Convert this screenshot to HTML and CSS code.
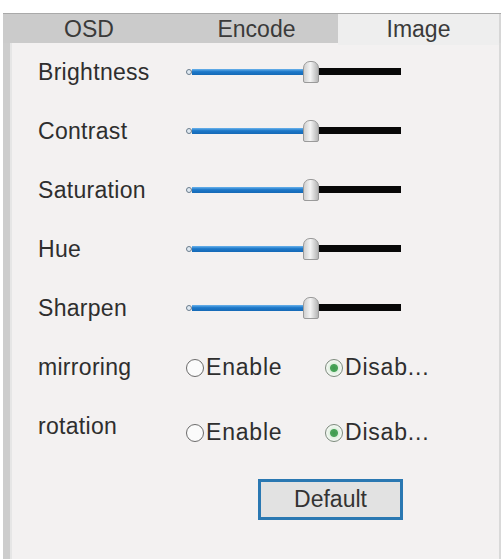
FILE: index.html
```html
<!doctype html>
<html lang="en">

<head>
	<title>Image settings</title>
	<meta charset="utf-8">
	<link rel="stylesheet" href="styles.css">
</head>

<body>
	<div class="strip"></div>
	<div class="dialog">
		<div class="tabs">
			<div class="tab">OSD</div>
			<div class="tab">Encode</div>
			<div class="tab active">Image</div>
		</div>
		<div class="panel">
			<div class="row">
				<span class="label">Brightness</span>
				<div class="slider"><i class="cap"></i><i class="fill"></i><i class="knob"></i><i class="rest"></i></div>
			</div>
			<div class="row">
				<span class="label">Contrast</span>
				<div class="slider"><i class="cap"></i><i class="fill"></i><i class="knob"></i><i class="rest"></i></div>
			</div>
			<div class="row">
				<span class="label">Saturation</span>
				<div class="slider"><i class="cap"></i><i class="fill"></i><i class="knob"></i><i class="rest"></i></div>
			</div>
			<div class="row">
				<span class="label">Hue</span>
				<div class="slider"><i class="cap"></i><i class="fill"></i><i class="knob"></i><i class="rest"></i></div>
			</div>
			<div class="row">
				<span class="label">Sharpen</span>
				<div class="slider"><i class="cap"></i><i class="fill"></i><i class="knob"></i><i class="rest"></i></div>
			</div>
			<div class="row">
				<span class="label">mirroring</span>
				<div class="options">
					<span class="option"><i class="radio"></i>Enable</span>
					<span class="option"><i class="radio checked"></i>Disab...</span>
				</div>
			</div>
			<div class="row">
				<span class="label">rotation</span>
				<div class="options low">
					<span class="option"><i class="radio"></i>Enable</span>
					<span class="option"><i class="radio checked"></i>Disab...</span>
				</div>
			</div>
			<div class="actions">
				<button class="default">Default</button>
			</div>
		</div>
	</div>
</body>

</html>
```

FILE: styles.css
```css
html
{
	margin: 0;
	padding: 0;
}
body
{
	margin: 0;
	padding: 0;
	background: #ffffff;
	font-family: "Liberation Sans", Arial, sans-serif;
	color: #333333;
	height: 559px;
	overflow: hidden;
}

.strip
{
	height: 13px;
}

.dialog
{
	margin: 0 3px 0 3px;
	border-top: 1px solid #a9a9a9;
}

.tabs
{
	display: grid;
	grid-template-columns: 172px 163px 1fr;
	height: 29px;
	background: #cbcbcb;
	border-right: 2px solid #d6d6d6;
}

.tab
{
	text-align: center;
	font-size: 23px;
	line-height: 31px;
	color: #3a3a3a;
}

.tab.active
{
	background: #eeeeee;
}

.panel
{
	background: #f3f1f1;
	border-left: 7px solid #cdcdcd;
	border-right: 2px solid #d9d9d9;
	box-shadow: inset 2px 0 0 #e6e6e6;
	height: 520px;
}

.row
{
	display: flex;
	align-items: center;
	height: 59px;
}

.label
{
	width: 176px;
	padding-left: 28px;
	box-sizing: border-box;
	font-size: 23px;
	letter-spacing: 0.3px;
	color: #2e2e2e;
}

.slider
{
	display: flex;
	align-items: center;
	width: 216px;
	height: 22px;
	margin-top: -2px;
}

.slider i
{
	display: block;
}

.cap
{
	width: 4px;
	height: 4px;
	border: 1px solid #6a7c8c;
	border-radius: 50%;
	background: #dfe9f2;
}

.fill
{
	width: 111px;
	height: 6px;
	background: linear-gradient(#6bb3ec, #1c78c9 45%, #1569b6);
}

.knob
{
	width: 14px;
	height: 20px;
	border: 1px solid #9a9a9a;
	border-radius: 7px 7px 2px 2px;
	background: linear-gradient(90deg, #d0d0d0, #f4f4f4 45%, #b5b5b5);
}

.rest
{
	width: 82px;
	height: 7px;
	background: #080808;
}

.options
{
	display: flex;
	font-size: 23px;
	letter-spacing: 0.8px;
	color: #2e2e2e;
}

.options.low
{
	margin-top: 12px;
}

.option
{
	display: flex;
	align-items: center;
	width: 139px;
}

.radio
{
	display: block;
	width: 16px;
	height: 16px;
	margin-right: 2px;
	border: 1.5px solid #6b6b6b;
	border-radius: 50%;
	background: #fbfbfb;
}

.radio.checked
{
	background: radial-gradient(circle, #3d9b4d 0, #4aa45a 3.5px, #dff0df 4.5px, #f6f9f6 8px);
	border-color: #7c8a7c;
}

.actions
{
	padding: 23px 0 0 248px;
}

.default
{
	width: 145px;
	height: 41px;
	border: 3px solid #2a78b2;
	background: #e2e2e2;
	font-family: "Liberation Sans", Arial, sans-serif;
	font-size: 23px;
	color: #333333;
	padding: 0;
}
```
